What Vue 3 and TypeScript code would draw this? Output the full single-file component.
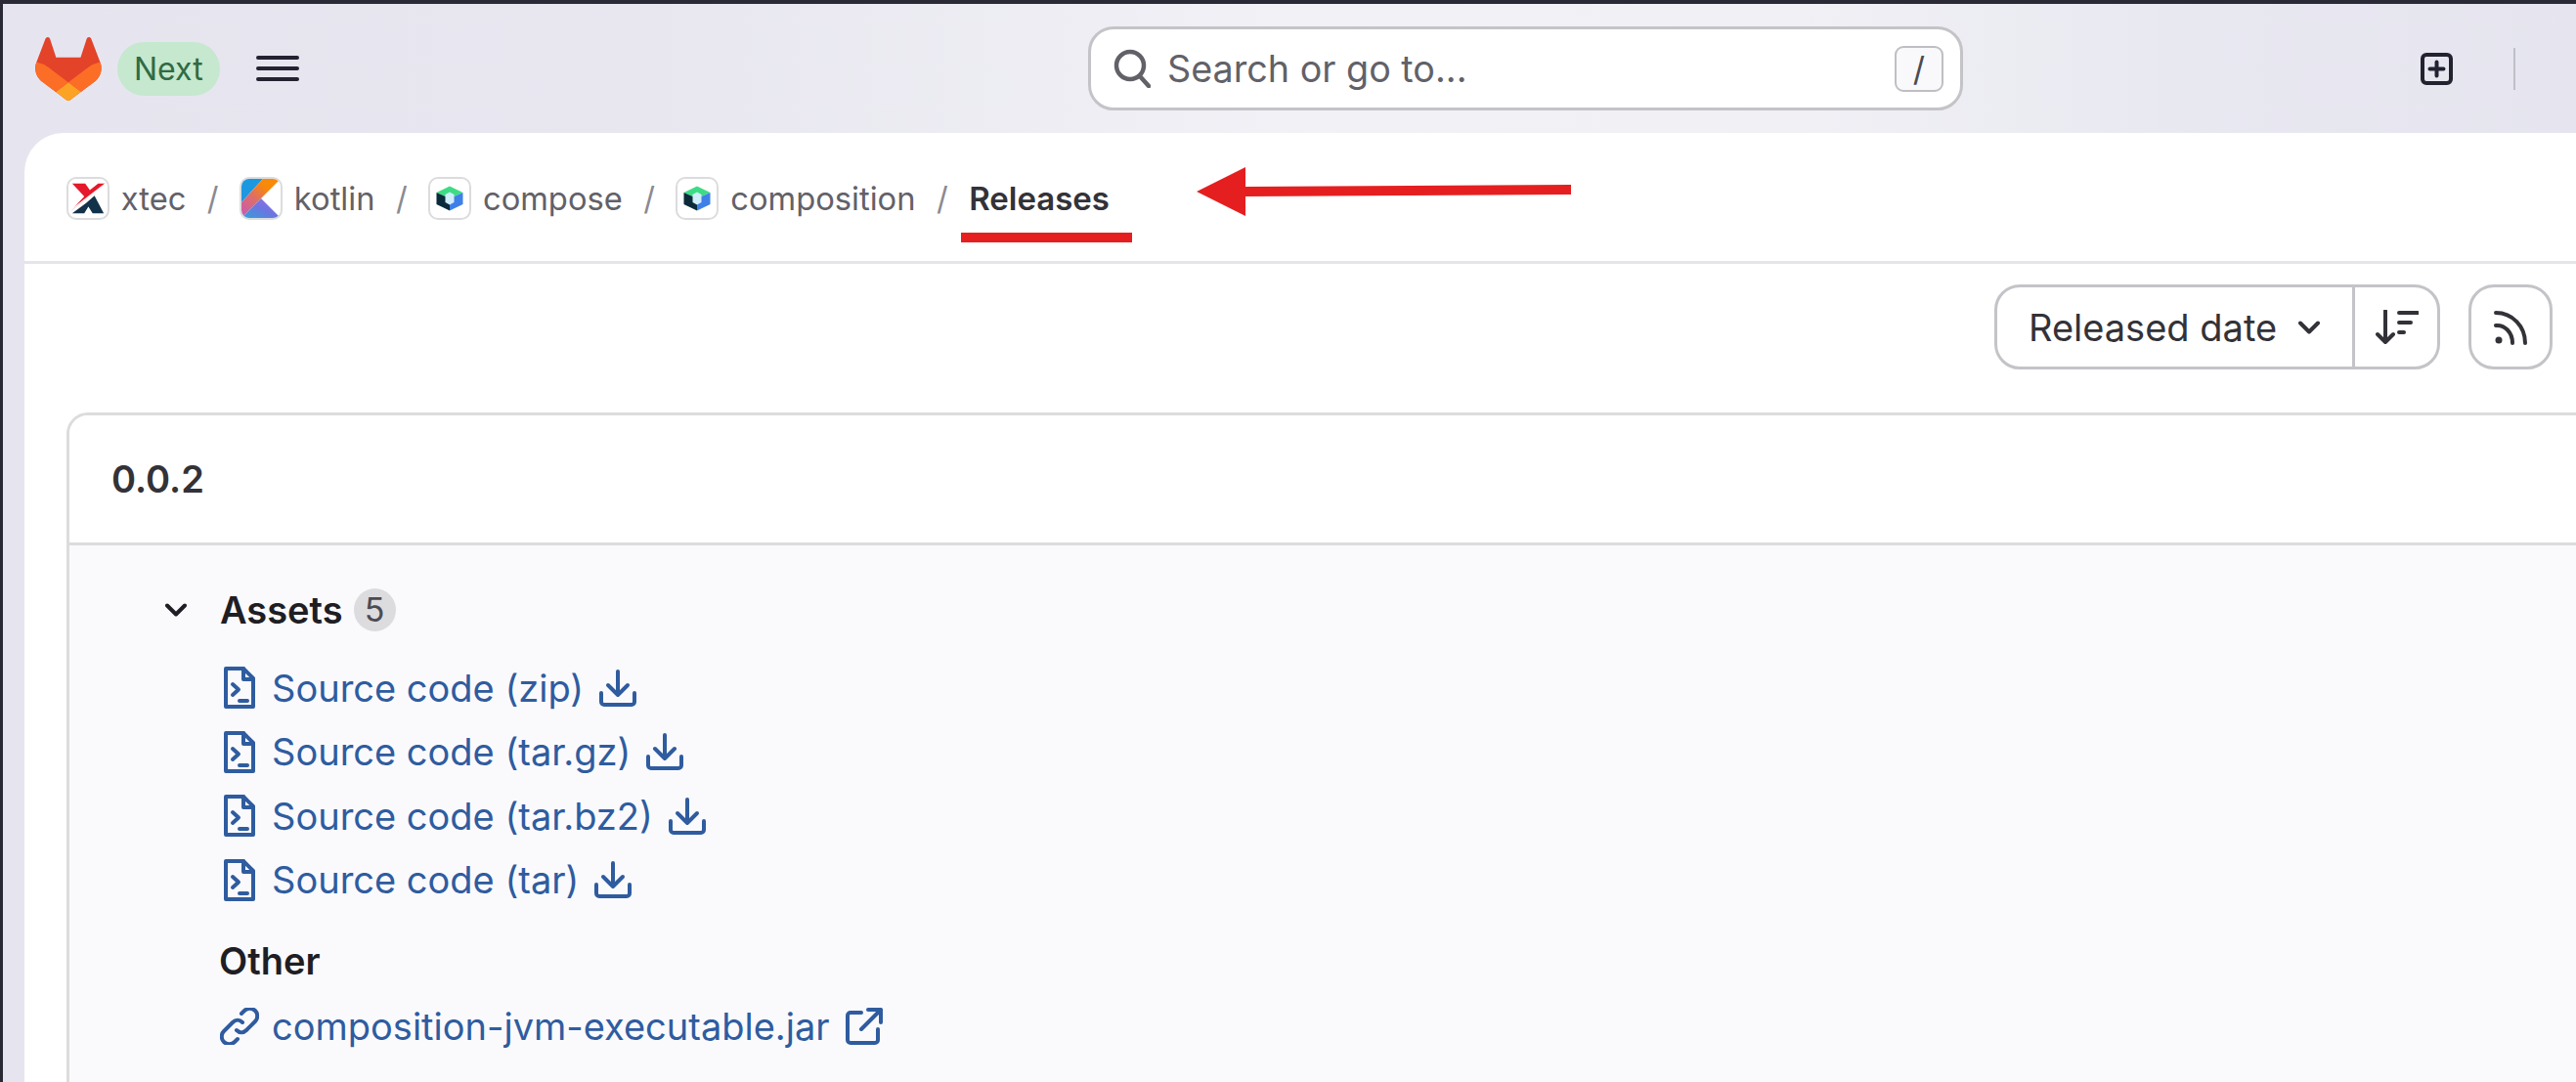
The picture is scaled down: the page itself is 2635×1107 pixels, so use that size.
<template>
  <div class="screen">
    <header class="topbar">
      <div class="brand">
        <svg class="tanuki" viewBox="0 0 25 24">
          <path d="m24.507 9.5-.034-.09L21.082.562a.896.896 0 0 0-1.694.091l-2.29 7.01H7.825L5.535.653a.898.898 0 0 0-1.694-.09L.451 9.411.416 9.5a6.297 6.297 0 0 0 2.09 7.278l.012.01.03.022 5.16 3.867 2.56 1.935 1.554 1.176a1.051 1.051 0 0 0 1.268 0l1.555-1.176 2.56-1.935 5.197-3.89.014-.01A6.297 6.297 0 0 0 24.507 9.5Z" fill="#E24329" />
          <path d="m24.507 9.5-.034-.09a11.44 11.44 0 0 0-4.56 2.051l-7.447 5.632 4.742 3.584 5.197-3.89.014-.01A6.297 6.297 0 0 0 24.507 9.5Z" fill="#FC6D26" />
          <path d="m7.707 20.677 2.56 1.935 1.555 1.176a1.051 1.051 0 0 0 1.268 0l1.555-1.176 2.56-1.935-4.743-3.584-4.755 3.584Z" fill="#FCA326" />
          <path d="M5.01 11.461a11.43 11.43 0 0 0-4.56-2.05L.416 9.5a6.297 6.297 0 0 0 2.09 7.278l.012.01.03.022 5.16 3.867 4.745-3.584-7.444-5.632Z" fill="#FC6D26" />
        </svg>
        <span class="next-pill">Next</span>
        <svg class="burger" viewBox="0 0 44 28">
          <path d="M2 3h40M2 14h40M2 25h40" />
        </svg>
      </div>
      <div class="search">
        <svg class="search-icon" viewBox="0 0 38 40">
          <circle cx="17" cy="17" r="14" />
          <path d="M27 28l9 10" />
        </svg>
        <span class="search-text">Search or go to...</span>
        <kbd class="search-key">/</kbd>
      </div>
      <div class="top-actions">
        <svg class="plus-box" viewBox="0 0 33 33">
          <rect x="2" y="2" width="29" height="29" rx="4" />
          <path d="M16.5 9.5v14M9.5 16.5h14" />
        </svg>
        <span class="top-divider"></span>
      </div>
    </header>

    <main class="panel">
      <nav class="crumbs">
        <template v-for="crumb in crumbs" :key="crumb.name">
          <span class="avatar" :class="crumb.logo">
            <svg v-if="crumb.logo === 'xtec'" viewBox="0 0 40 40">
              <path d="M3 4h14l5 7 9-7h8L1 34l15-16z" fill="#e5192b" />
              <path d="M18 25l9-8 10 19H25zM3 36l15-11 3 3-5 8z" fill="#12324a" />
              <path d="M0 34L39 4" stroke="#fff" stroke-width="1.200" />
            </svg>
            <svg v-else-if="crumb.logo === 'kotlin'" viewBox="0 0 40 40">
              <defs>
                <linearGradient id="kotlin-a" x1="0" y1="1" x2="1" y2="0">
                  <stop offset="0" stop-color="#c757bc" />
                  <stop offset="0.45" stop-color="#e0705e" />
                  <stop offset="0.7" stop-color="#f88909" />
                </linearGradient>
                <linearGradient id="kotlin-c" x1="0" y1="1" x2="1" y2="0">
                  <stop offset="0" stop-color="#2ea3d8" />
                  <stop offset="0.5" stop-color="#6d74e1" />
                  <stop offset="1" stop-color="#9a70e0" />
                </linearGradient>
              </defs>
              <path d="M0 0h22L0 24z" fill="#1b98e0" />
              <path d="M22 0h18L0 40V24z" fill="url(#kotlin-a)" />
              <path d="M0 40l20-20 20 20z" fill="url(#kotlin-c)" />
            </svg>
            <svg v-else viewBox="0 0 34 34">
              <path d="M17 4.500L30.500 11 17 17 3.500 11z" fill="#3ddc84" />
              <path d="M3.500 11L17 17v12.500L3.500 23z" fill="#0b2a3a" />
              <path d="M30.500 11L17 17v12.500L30.500 23z" fill="#3f80e8" />
              <path d="M17 10.500l4.500 2.500v8L17 23.500 12.500 21v-8z" fill="#cfeefa" />
            </svg>
          </span>
          <span class="crumb-name">{{ crumb.name }}</span>
          <span class="crumb-slash">/</span>
        </template>
        <span class="crumb-current">Releases</span>
      </nav>

      <div class="toolbar">
        <div class="sort-group">
          <div class="sort-select">
            <span>Released date</span>
            <svg class="sort-chevron" viewBox="0 0 22 14"><path d="M2 2.500l9 9 9-9" /></svg>
          </div>
          <div class="sort-dir">
            <svg viewBox="0 0 44 36">
              <path d="M10 1v32M2 25l8 8 8-8" />
              <path d="M24 3h19M24 13h12M24 23h5" />
            </svg>
          </div>
        </div>
        <div class="rss-btn">
          <svg viewBox="0 0 34 36">
            <circle cx="5" cy="31" r="3.500" class="dot" />
            <path d="M2 16c9-1 17 7 17 18" />
            <path d="M2 3c17 0 30 14 30 31" />
          </svg>
        </div>
      </div>

      <section class="release-card">
        <h2 class="release-title">0.0.2</h2>
        <div class="release-body">
          <div class="assets-head">
            <svg class="assets-chevron" viewBox="0 0 22 14"><path d="M2 2.500l9 9 9-9" /></svg>
            <strong class="assets-label">Assets</strong>
            <span class="count">5</span>
          </div>
          <ul class="source-list">
            <li v-for="item in sources" :key="item">
              <a class="asset-link">
                <svg class="file-icon" viewBox="0 0 32 43">
                  <path d="M2 2h18l10 10v29H2z" />
                  <path d="M20 2v11h10" />
                  <path d="M9 18l6 5.500-6 5.500M16 35h8" />
                </svg>
                <span>{{ item }}</span>
                <svg class="side-icon" viewBox="0 0 38 38">
                  <path d="M19 2v24M9 16l10 10 10-10" />
                  <path d="M2 24v9a3 3 0 0 0 3 3h28a3 3 0 0 0 3-3v-9" />
                </svg>
              </a>
            </li>
          </ul>
          <h3 class="other-title">Other</h3>
          <a class="asset-link">
            <svg class="link-icon" viewBox="0 0 40 38">
              <path d="M17 23c3 3 7 3 10 0l9-9c3-3 3-8 0-11s-8-3-11 0l-3 3" />
              <path d="M23 15c-3-3-7-3-10 0l-9 9c-3 3-3 8 0 11s8 3 11 0l3-3" />
            </svg>
            <span>composition-jvm-executable.jar</span>
            <svg class="side-icon" viewBox="0 0 38 38">
              <path d="M16 5H5a3 3 0 0 0-3 3v25a3 3 0 0 0 3 3h25a3 3 0 0 0 3-3V22" />
              <path d="M16 22L36 2M23 2h13v13" />
            </svg>
          </a>
        </div>
      </section>
    </main>

    <!-- annotation drawn on top of the screenshot -->
    <div class="mark-underline"></div>
    <svg class="mark-arrow" viewBox="0 0 383 50">
      <path d="M0 25L50 0v20l333-2v10L50 30v20z" />
    </svg>
  </div>
</template>

<script setup lang="ts">
interface Crumb {
  name: string
  logo: 'xtec' | 'kotlin' | 'hex'
}

const crumbs: Crumb[] = [
  { name: 'xtec', logo: 'xtec' },
  { name: 'kotlin', logo: 'kotlin' },
  { name: 'compose', logo: 'hex' },
  { name: 'composition', logo: 'hex' }
]

const sources = ['Source code (zip)', 'Source code (tar.gz)', 'Source code (tar.bz2)', 'Source code (tar)']
</script>

<style>
html,
body {
  margin: 0;
  background: #fff;
}
</style>

<style scoped>
.screen {
  position: relative;
  width: 2635px;
  height: 1107px;
  box-sizing: border-box;
  overflow: hidden;
  border-top: 4px solid #2a2936;
  border-left: 3px solid #2a2936;
  background: linear-gradient(90deg, #e6e5ef 0%, #e8e7f0 25%, #f1f1f6 50%, #f0f0f5 70%, #e8e8f1 85%, #e6e5ef 100%);
  font-family: Inter, "Noto Sans", sans-serif;
  color: #333238;
}

svg {
  display: block;
  flex: none;
}

.topbar {
  display: flex;
  align-items: center;
  height: 132px;
  padding-left: 33px;
  box-sizing: border-box;
}

.brand {
  display: flex;
  align-items: center;
  width: 1077px;
}

.tanuki {
  width: 68px;
  height: 65px;
}

.next-pill {
  margin-left: 16px;
  padding: 0 17px;
  height: 55px;
  line-height: 55px;
  border-radius: 28px;
  background: #c6e8cf;
  color: #2f6b44;
  font-size: 32px;
}

.burger {
  width: 44px;
  height: 28px;
  margin-left: 37px;
  fill: none;
  stroke: #232230;
  stroke-width: 4;
  stroke-linecap: round;
}

.search {
  display: flex;
  align-items: center;
  width: 895px;
  height: 86px;
  box-sizing: border-box;
  padding: 0 17px 0 23px;
  background: #fff;
  border: 3px solid #c4c4c8;
  border-radius: 26px;
}

.search-icon {
  width: 38px;
  height: 40px;
  fill: none;
  stroke: #626168;
  stroke-width: 4.500;
  stroke-linecap: round;
}

.search-text {
  margin-left: 17px;
  font-size: 37.700px;
  color: #626168;
}

.search-key {
  margin-left: auto;
  width: 50px;
  height: 47px;
  box-sizing: border-box;
  border: 2px solid #bfbfc3;
  border-radius: 9px;
  background: #f9f9fb;
  font-family: Inter, sans-serif;
  font-size: 34px;
  line-height: 43px;
  text-align: center;
  color: #4c4b52;
}

.top-actions {
  display: flex;
  align-items: center;
  margin-left: 468px;
}

.plus-box {
  width: 33px;
  height: 33px;
  fill: none;
  stroke: #232230;
  stroke-width: 4;
  stroke-linecap: round;
}

.top-divider {
  width: 2px;
  height: 43px;
  margin-left: 62px;
  background: #bfbfc6;
}

.panel {
  height: 971px;
  margin-left: 22px;
  background: #fff;
  border-top-left-radius: 40px;
}

.crumbs {
  display: flex;
  align-items: center;
  height: 134px;
  box-sizing: border-box;
  padding-left: 43px;
  padding-top: 3px;
  border-bottom: 3px solid #e4e4ec;
  font-size: 32.700px;
  color: #626168;
}

.avatar {
  display: flex;
  align-items: center;
  justify-content: center;
  width: 44px;
  height: 44px;
  box-sizing: border-box;
  border: 2px solid #dcdcde;
  border-radius: 10px;
  background: #fff;
  overflow: hidden;
}

.avatar svg {
  width: 34px;
  height: 34px;
}

.avatar.xtec svg {
  width: 38px;
  height: 38px;
}

.avatar.kotlin svg {
  width: 40px;
  height: 40px;
}

.crumb-name {
  margin-left: 11.800px;
}

.crumb-slash {
  margin: 0 21.450px;
  color: #8b8a91;
}

.crumb-current {
  font-size: 33px;
  font-weight: 600;
  color: #333238;
}

.toolbar {
  display: flex;
  justify-content: flex-end;
  gap: 29px;
  padding: 21px 24px 0 0;
}

.sort-group {
  display: flex;
  width: 456px;
  height: 87px;
  box-sizing: border-box;
  border: 3px solid #c4c4c8;
  border-radius: 26px;
}

.sort-select {
  display: flex;
  align-items: center;
  gap: 22px;
  width: 366px;
  margin-block: -3px;
  box-sizing: border-box;
  padding-left: 32px;
  font-size: 38px;
  color: #333238;
  border-right: 3px solid #c4c4c8;
}

.sort-chevron,
.assets-chevron {
  width: 22px;
  height: 14px;
  fill: none;
  stroke-width: 4;
  stroke-linecap: round;
  stroke-linejoin: round;
}

.sort-chevron {
  stroke: #333238;
}

.assets-chevron {
  stroke: #1f1e24;
}

.sort-dir {
  display: flex;
  align-items: center;
  padding-left: 21px;
}

.sort-dir svg {
  width: 44px;
  height: 36px;
  fill: none;
  stroke: #333238;
  stroke-width: 4;
  stroke-linecap: round;
  stroke-linejoin: round;
}

.rss-btn {
  display: flex;
  align-items: center;
  justify-content: center;
  width: 86px;
  height: 87px;
  box-sizing: border-box;
  border: 3px solid #c4c4c8;
  border-radius: 26px;
}

.rss-btn svg {
  width: 34px;
  height: 36px;
  fill: none;
  stroke: #333238;
  stroke-width: 4;
  stroke-linecap: round;
}

.rss-btn .dot {
  fill: #333238;
  stroke: none;
}

.release-card {
  width: 2600px;
  margin: 44px 0 0 43px;
  border: 3px solid #dcdcde;
  border-radius: 22px 0 0 0;
  overflow: hidden;
}

.release-title {
  height: 130px;
  margin: 0;
  padding-left: 43px;
  line-height: 130px;
  font-size: 38px;
  font-weight: 600;
  color: #333238;
  background: #fff;
  border-bottom: 3px solid #dcdcde;
}

.release-body {
  height: 560px;
  padding: 43px 0 0 158px;
  background: #fafafd;
}

.assets-head {
  display: flex;
  align-items: center;
  height: 45px;
  margin-left: -60px;
}

.assets-label {
  margin-left: 34px;
  font-size: 38px;
  font-weight: 600;
  color: #1f1e24;
}

.count {
  margin-left: 11px;
  width: 43px;
  height: 44px;
  line-height: 44px;
  border-radius: 50%;
  background: #dcdcde;
  text-align: center;
  font-size: 34px;
  color: #4c4b52;
}

.source-list {
  margin: 36px 0 0;
  padding: 0;
  list-style: none;
  display: flex;
  flex-direction: column;
  gap: 22px;
}

.asset-link {
  display: flex;
  align-items: center;
  height: 43.500px;
  font-size: 38px;
  color: #2f5c9f;
}

.file-icon {
  width: 32px;
  height: 43px;
  margin-right: 17px;
  fill: none;
  stroke: #2f5c9f;
  stroke-width: 4;
  stroke-linejoin: round;
  stroke-linecap: round;
}

.side-icon {
  width: 38px;
  height: 38px;
  margin-left: 16px;
  fill: none;
  stroke: #2f5c9f;
  stroke-width: 4;
  stroke-linecap: round;
  stroke-linejoin: round;
}

.link-icon {
  width: 40px;
  height: 38px;
  margin-left: -4px;
  margin-right: 13px;
  fill: none;
  stroke: #2f5c9f;
  stroke-width: 4;
  stroke-linecap: round;
}

.other-title {
  margin: 39px 0 23px -5px;
  font-size: 38px;
  line-height: 44px;
  font-weight: 600;
  color: #1f1e24;
}

/* red marks someone added over the screenshot */
.mark-underline {
  position: absolute;
  left: 980px;
  top: 234px;
  width: 175px;
  height: 10px;
  background: #e51f20;
}

.mark-arrow {
  position: absolute;
  left: 1221px;
  top: 167px;
  width: 383px;
  height: 50px;
  fill: #e51f20;
}
</style>
